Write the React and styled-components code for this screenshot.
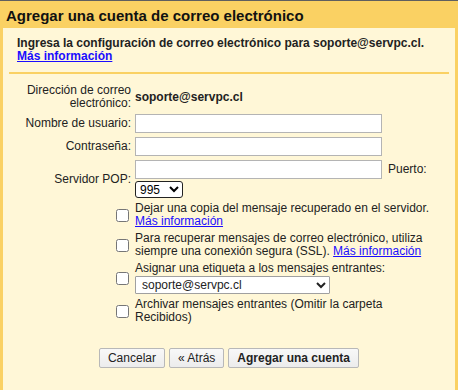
import React from "react";
import styled, { createGlobalStyle } from "styled-components";

const GlobalStyle = createGlobalStyle`
  html, body {
    margin: 0;
    padding: 0;
    background: #fff7d7;
  }
  body {
    font-family: "Liberation Sans", Arial, sans-serif;
    font-size: 12px;
    color: #222;
  }
`;

const Dialog = styled.div`
  width: 458px;
  height: 390px;
  box-sizing: border-box;
  border-top: 1px solid #5f5f5f;
  background: #fad163;
  display: flex;
  flex-direction: column;
  overflow: hidden;
`;

const Title = styled.h1`
  margin: 0;
  padding: 7px 6px 5px;
  font-size: 15px;
  line-height: 15px;
  font-weight: bold;
  color: #111;
`;

const Panel = styled.div`
  flex: 1;
  margin: 0 3px;
  background: #fff7d7;
  padding: 9px 6px 0;
`;

const Intro = styled.div`
  padding: 0 8px 9px;
  font-weight: bold;
  line-height: 13px;
  border-bottom: 2px solid #fad163;
`;

const Link = styled.a`
  color: #1a0dff;
  text-decoration: underline;
  cursor: pointer;
  font-weight: ${(p) => (p.bold ? "bold" : "normal")};
`;

const FormGrid = styled.div`
  display: grid;
  grid-template-columns: 108px 300px;
  column-gap: 4px;
  row-gap: 4px;
  align-items: center;
  padding: 10px 0 0 14px;
  line-height: 13px;
`;

const Label = styled.div`
  text-align: right;
  color: #222;
  display: flex;
  justify-content: flex-end;
  align-items: center;
`;

const Field = styled.div`
  color: #222;
  font-weight: ${(p) => (p.bold ? "bold" : "normal")};
`;

const ServerField = styled.div`
  display: flex;
  flex-wrap: wrap;
  align-items: center;
  color: #222;
`;

const TextInput = styled.input`
  display: block;
  box-sizing: border-box;
  width: 247px;
  height: 19px;
  margin: 0;
  border: 1px solid #b4b4b4;
  background: #fff;
  padding: 1px 3px;
  font: inherit;
`;

const PortLabel = styled.span`
  margin-left: 6px;
`;

const PortSelect = styled.select`
  display: block;
  margin-top: 2px;
  width: 48px;
  height: 17px;
  font-family: "Liberation Sans", Arial, sans-serif;
  font-size: 12px;
  padding: 0;
  border: 1px solid #222;
  border-radius: 3px;
  background: #fff;
`;

const LabelSelect = styled.select`
  display: block;
  margin-top: 1px;
  width: 195px;
  height: 18px;
  font-family: "Liberation Sans", Arial, sans-serif;
  font-size: 12px;
  padding: 0 2px;
  border: 1px solid #a0a0a0;
  border-radius: 1px;
  background: #fff;
  color: #222;
`;

const Check = styled.input.attrs({ type: "checkbox" })`
  width: 13px;
  height: 13px;
  margin: 0 2px 0 0;
`;

const Buttons = styled.div`
  display: flex;
  justify-content: center;
  gap: 4px;
  margin-top: 24px;
`;

const Button = styled.button`
  height: 20px;
  padding: 0 8px;
  font-family: "Liberation Sans", Arial, sans-serif;
  font-size: 12px;
  font-weight: ${(p) => (p.primary ? "bold" : "normal")};
  color: #222;
  background: linear-gradient(#f8f8f8, #ececec);
  border: 1px solid #b8b8b8;
  border-radius: 2px;
`;

export default function App() {
  return (
    <>
      <GlobalStyle />
      <Dialog>
        <Title>Agregar una cuenta de correo electrónico</Title>
        <Panel>
          <Intro>
            Ingresa la configuración de correo electrónico para soporte@servpc.cl.
            <br />
            <Link bold>Más información</Link>
          </Intro>
          <FormGrid>
            <Label>Dirección de correo electrónico:</Label>
            <Field bold>soporte@servpc.cl</Field>

            <Label>Nombre de usuario:</Label>
            <Field>
              <TextInput type="text" />
            </Field>

            <Label>Contraseña:</Label>
            <Field>
              <TextInput type="password" />
            </Field>

            <Label>Servidor POP:</Label>
            <ServerField>
              <TextInput type="text" />
              <PortLabel>Puerto:</PortLabel>
              <PortSelect defaultValue="995">
                <option>110</option>
                <option>995</option>
              </PortSelect>
            </ServerField>

            <Label>
              <Check />
            </Label>
            <Field>
              Dejar una copia del mensaje recuperado en el servidor.
              <br />
              <Link>Más información</Link>
            </Field>

            <Label>
              <Check />
            </Label>
            <Field>
              Para recuperar mensajes de correo electrónico, utiliza siempre una
              conexión segura (SSL). <Link>Más información</Link>
            </Field>

            <Label>
              <Check />
            </Label>
            <Field>
              Asignar una etiqueta a los mensajes entrantes:
              <LabelSelect defaultValue="soporte@servpc.cl">
                <option>soporte@servpc.cl</option>
              </LabelSelect>
            </Field>

            <Label>
              <Check />
            </Label>
            <Field>
              Archivar mensajes entrantes (Omitir la carpeta Recibidos)
            </Field>
          </FormGrid>
          <Buttons>
            <Button>Cancelar</Button>
            <Button>« Atrás</Button>
            <Button primary>Agregar una cuenta</Button>
          </Buttons>
        </Panel>
      </Dialog>
    </>
  );
}
